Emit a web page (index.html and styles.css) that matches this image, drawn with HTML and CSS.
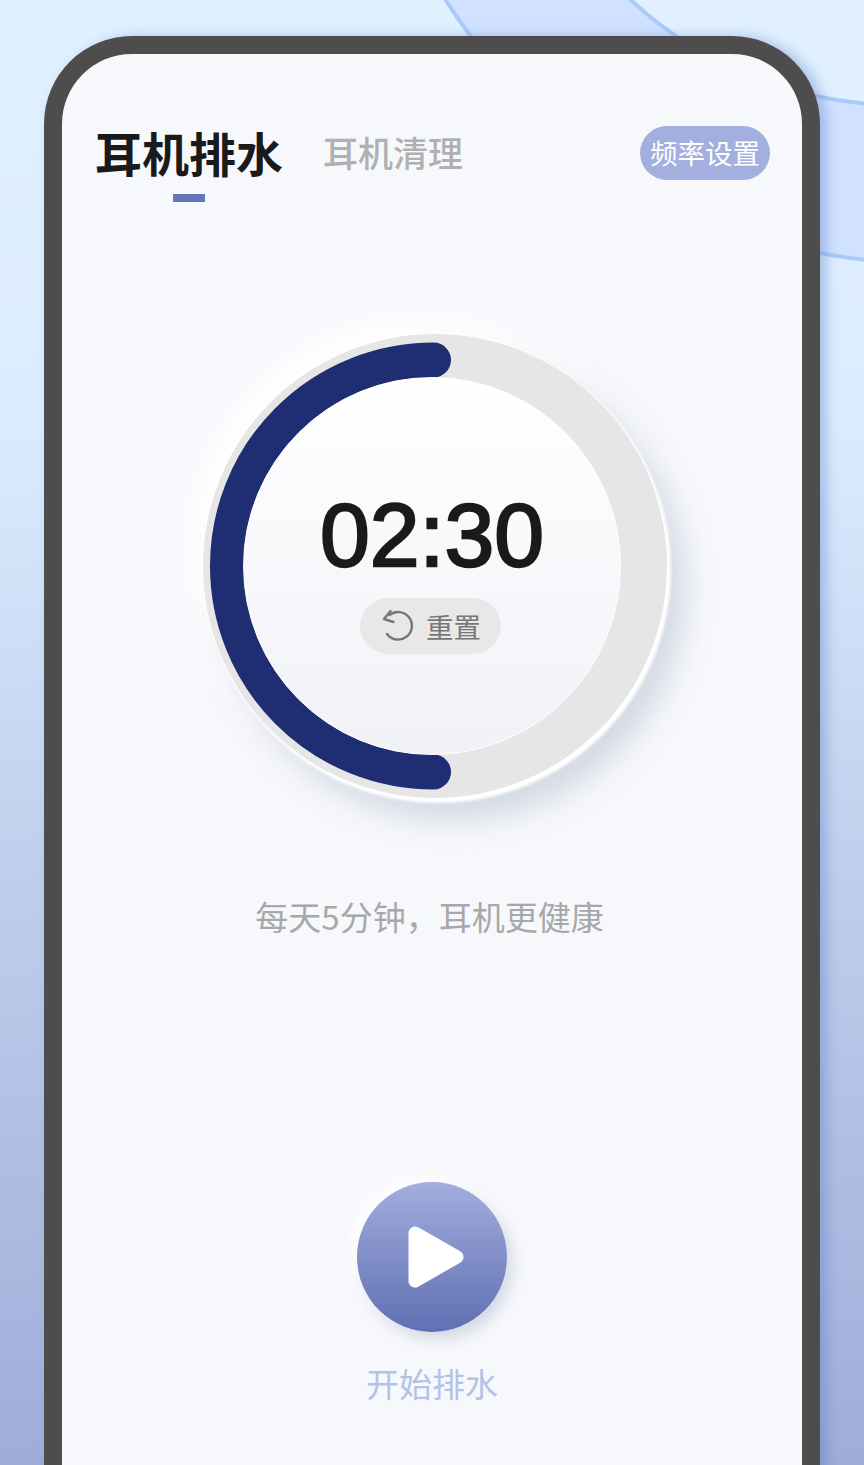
FILE: index.html
```html
<!DOCTYPE html>
<html lang="zh-CN">
<head>
<meta charset="utf-8">
<title>耳机排水</title>
<link rel="stylesheet" href="styles.css">
</head>
<body>
<svg class="deco" viewBox="0 0 864 300" width="864" height="300" aria-hidden="true">
  <circle cx="926" cy="-307" r="570" fill="#d0e2ff" stroke="#a9cbfb" stroke-width="4"/>
  <circle cx="899" cy="-290" r="395" fill="#e0f0ff" stroke="#a9cbfb" stroke-width="4"/>
</svg>
<main class="phone">
  <header class="top">
    <div class="tabs">
      <div class="tab-active">
        <span class="tab-title">耳机排水</span>
        <span class="tab-bar"></span>
      </div>
      <span class="tab-other">耳机清理</span>
    </div>
    <button class="chip">频率设置</button>
  </header>

  <section class="dial">
    <div class="dial-track">
      <svg class="dial-arc" viewBox="0 0 464 464" width="464" height="464" aria-hidden="true">
        <path d="M230.500 26 A206 206 0 0 0 230.500 438" fill="none" stroke="#1f2d72" stroke-width="35" stroke-linecap="round"/>
      </svg>
      <div class="dial-face">
        <div class="time">02:30</div>
        <button class="reset">
          <svg class="reset-icon" viewBox="0 0 32 32" width="32" height="32" aria-hidden="true">
            <path d="M5 24 A13.800 13.800 0 1 0 7.500 5" fill="none" stroke="#777" stroke-width="2.400" stroke-linecap="round"/>
            <path d="M8.500 1 L2 9 L11.500 12" fill="none" stroke="#777" stroke-width="2.400" stroke-linecap="round" stroke-linejoin="round"/>
          </svg>
          <span>重置</span>
        </button>
      </div>
    </div>
  </section>

  <p class="caption">每天5分钟，耳机更健康</p>

  <section class="start">
    <button class="play">
      <svg viewBox="0 0 56 62" width="56" height="62" aria-hidden="true">
        <path d="M7 7 L49 31 L7 55 Z" fill="#fff" stroke="#fff" stroke-width="13" stroke-linejoin="round"/>
      </svg>
    </button>
    <span class="start-label">开始排水</span>
  </section>
</main>
</body>
</html>
```
FILE: styles.css
```css
* { box-sizing: border-box; }

html, body {
  margin: 0;
  height: 1465px;
  overflow: hidden;
}

body {
  position: relative;
  padding: 36px 0 0 44px;
  background: linear-gradient(180deg, #e0f1ff 0, #dcecff 28%, #bccdec 62%, #9eadd8 100%);
  font-family: "Noto Sans CJK SC", "Liberation Sans", sans-serif;
}

button {
  border: 0;
  padding: 0;
  font: inherit;
}

.deco {
  position: absolute;
  top: 0;
  left: 0;
}

.phone {
  position: relative;
  width: 776px;
  height: 1480px;
  border: 18px solid #4d4d4d;
  border-bottom: 0;
  border-radius: 88px 88px 0 0;
  background: #f7f8fc;
  box-shadow: 7px 0 12px rgba(80, 115, 190, .35);
  display: flex;
  flex-direction: column;
  align-items: center;
}

.top {
  width: 100%;
  display: flex;
  justify-content: space-between;
  align-items: flex-start;
  padding: 72px 32px 0 33px;
}

.tabs {
  display: flex;
  align-items: flex-start;
  gap: 40px;
}

.tab-active {
  display: flex;
  flex-direction: column;
  align-items: center;
}

.tab-title {
  font-size: 47px;
  line-height: 52px;
  font-weight: 700;
  color: #1a1a1a;
}

.tab-bar {
  width: 32px;
  height: 8px;
  margin-top: 16px;
  background: #6676ba;
}

.tab-other {
  margin-top: 5px;
  font-size: 35px;
  line-height: 42px;
  font-weight: 500;
  color: #b0b0b0;
}

.chip {
  width: 130px;
  height: 54px;
  padding-bottom: 3px;
  border-radius: 27px;
  background: #a3afdf;
  color: #fff;
  font-size: 27.500px;
  text-align: center;
}

.dial {
  margin-top: 132px;
  margin-left: 5px;
}

.dial-track {
  position: relative;
  width: 464px;
  height: 464px;
  border-radius: 50%;
  background: #e6e6e6;
  display: flex;
  align-items: center;
  justify-content: center;
  box-shadow: 3px 4px 3px 1px #fff, -1px -1px 3px #fff, 18px 22px 30px rgba(165, 180, 195, .45), -14px -16px 34px #fff;
}

.dial-arc {
  position: absolute;
  top: 0;
  left: 0;
}

.dial-face {
  position: relative;
  width: 378px;
  height: 378px;
  margin-right: 5px;
  border-radius: 50%;
  border: 1.500px solid #fff;
  background: linear-gradient(180deg, #fff 0, #f1f2f8 100%);
  display: flex;
  flex-direction: column;
  align-items: center;
}

.time {
  margin-top: 105px;
  font-family: "Liberation Sans", Arial, sans-serif;
  font-size: 89.500px;
  line-height: 104px;
  -webkit-text-stroke: 2.400px #1a1a1a;
  color: #1a1a1a;
}

.reset {
  margin: 11px 3px 0 0;
  width: 141px;
  height: 56px;
  border-radius: 28px;
  background: #e8e8e8;
  color: #777;
  font-size: 27.500px;
  display: flex;
  align-items: center;
  gap: 12px;
  padding-left: 22px;
}

.caption {
  margin: 96px 5px 0 0;
  font-size: 33px;
  line-height: 44px;
  color: #a8a8a8;
}

.start {
  margin-top: 244px;
  display: flex;
  flex-direction: column;
  align-items: center;
}

.play {
  width: 150px;
  height: 150px;
  border-radius: 50%;
  background: linear-gradient(180deg, #a3aede 0, #5f6fb2 100%);
  display: flex;
  align-items: center;
  justify-content: center;
  padding-left: 8px;
  box-shadow: 6px 8px 14px rgba(160, 175, 195, .4), -6px -6px 14px #fff;
}

.start-label {
  margin-top: 28px;
  font-size: 33px;
  line-height: 46px;
  color: #b3c2e8;
}
```
